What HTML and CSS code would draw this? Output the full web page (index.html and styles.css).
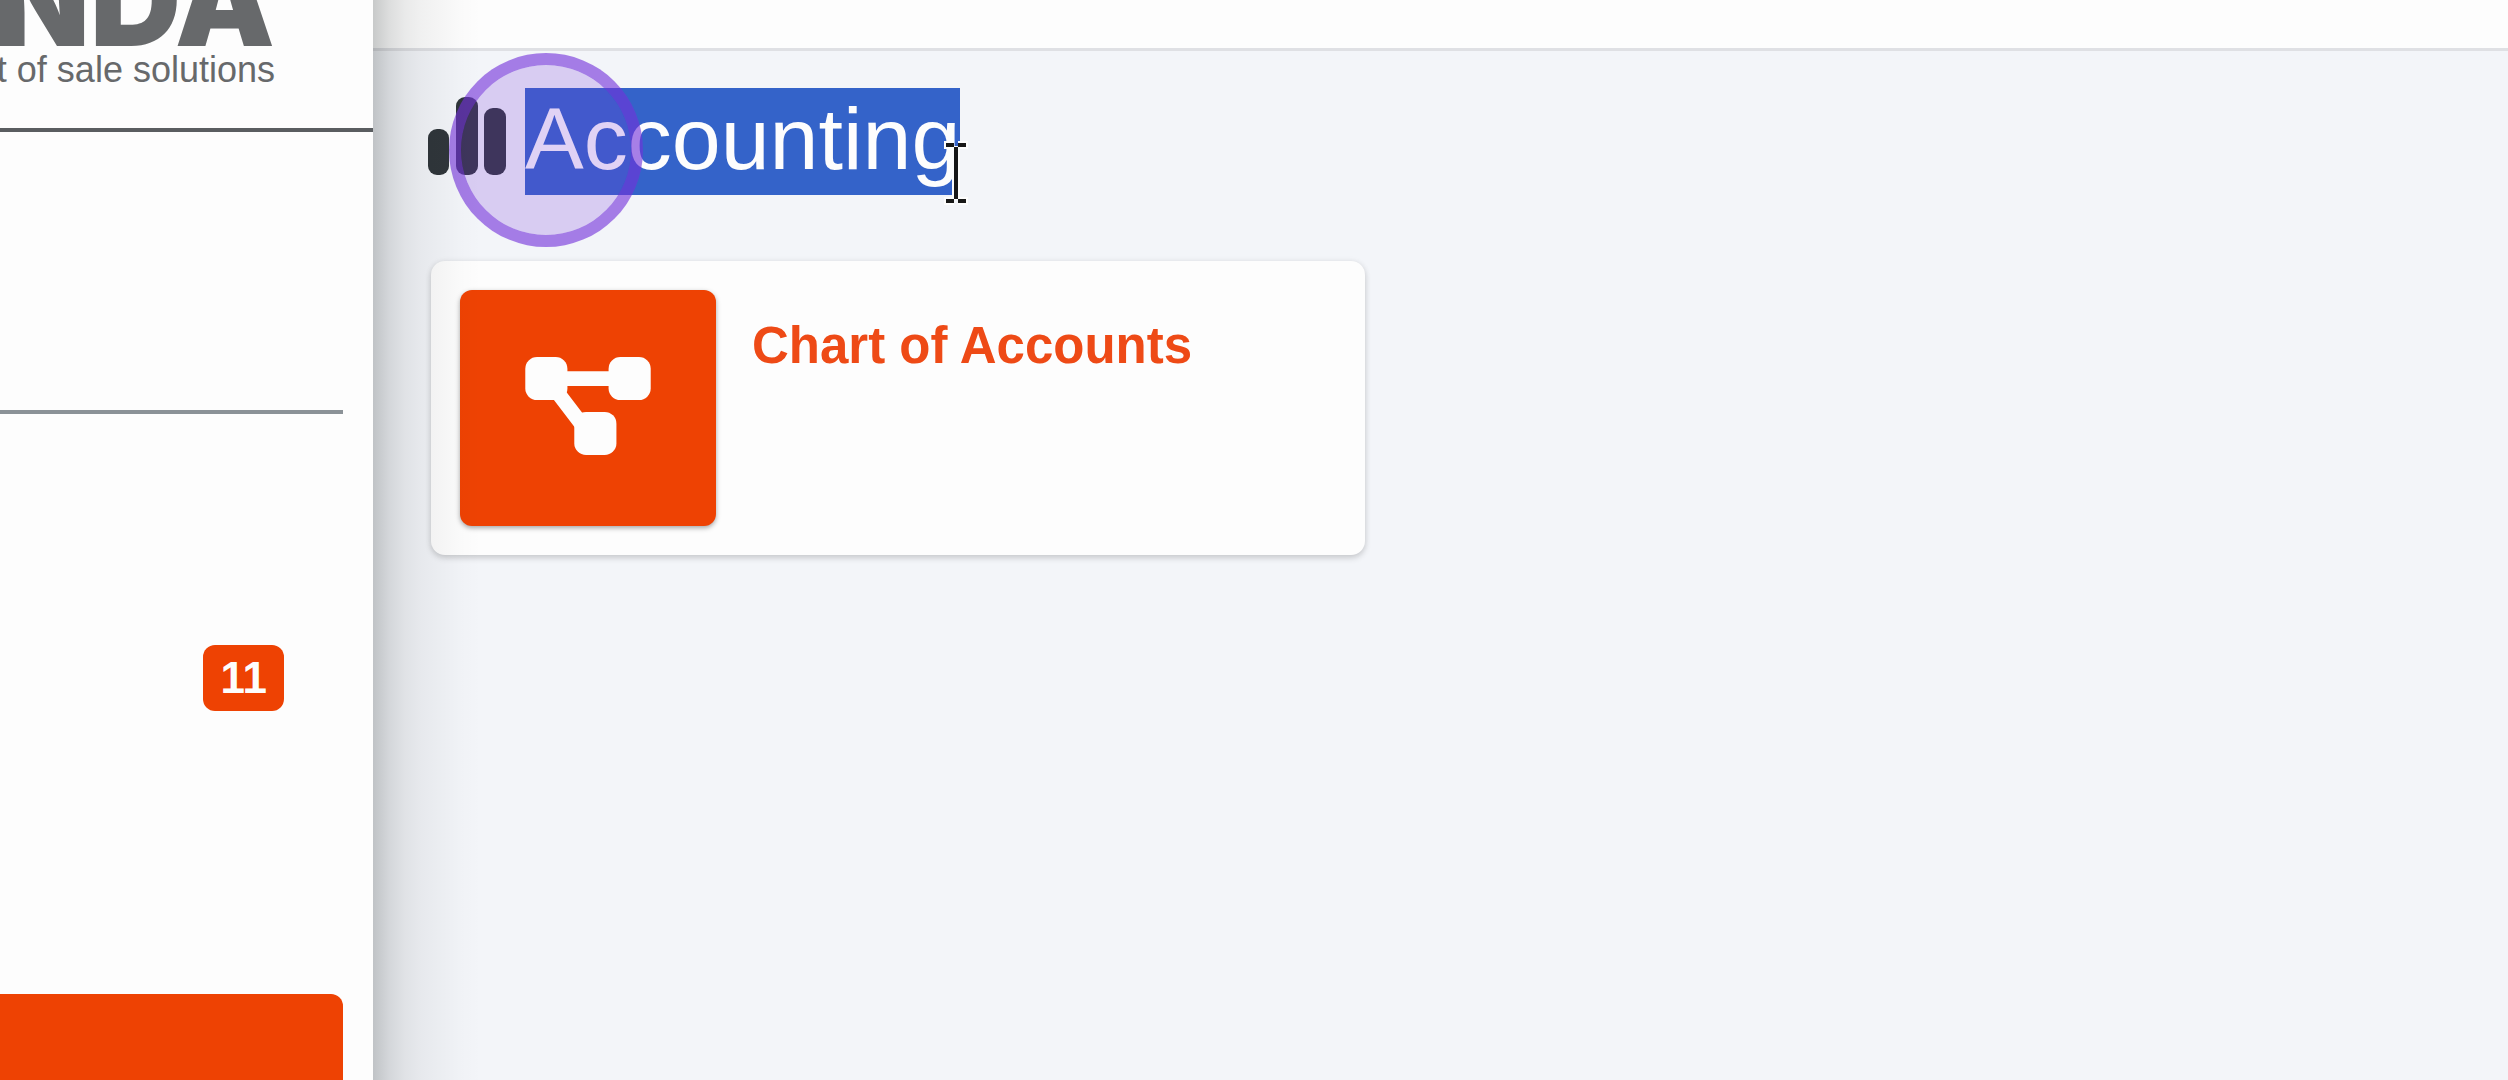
FILE: index.html
```html
<!DOCTYPE html>
<html lang="en">
<head>
<meta charset="utf-8">
<meta name="viewport" content="width=device-width, initial-scale=1">
<title>Accounting</title>
<link rel="stylesheet" href="styles.css">
</head>
<body>
<div class="app">
  <aside class="sidebar">
    <div class="brand">
      <span class="brand-name">NDA</span>
      <span class="brand-tagline">t of sale solutions</span>
    </div>
    <div class="sidebar-body">
      <div class="sidebar-section"></div>
      <div class="sidebar-item"><span class="badge">11</span></div>
      <button class="sidebar-button" type="button" aria-label="Open section"></button>
    </div>
  </aside>
  <div class="content">
    <header class="topbar"></header>
    <main class="page">
      <h1 class="page-title">
        <svg class="title-icon" viewBox="0 0 80 80" aria-hidden="true">
          <rect x="1" y="32" width="21" height="46" rx="9"/>
          <rect x="29" y="0" width="22" height="78" rx="9"/>
          <rect x="57" y="11" width="22" height="67" rx="9"/>
        </svg>
        <mark class="selected">Accounting</mark>
        <span class="click-ring"></span>
        <svg class="text-cursor" viewBox="0 0 28 64" aria-hidden="true">
          <path class="cursor-halo" d="M2 4h10M16 4h10M14 5v54M2 60h10M16 60h10"/>
          <path class="cursor-line" d="M4 4h8M16 4h8M14 6v52M4 60h8M16 60h8"/>
        </svg>
      </h1>
      <a class="card" href="#">
        <span class="card-icon">
          <svg class="diagram-icon" viewBox="0 0 128 100" aria-hidden="true">
            <path class="diagram-links" d="M22 22H106M22 22L70 85"/>
            <rect x="0" y="0" width="43" height="44" rx="12"/>
            <rect x="85" y="0" width="43" height="44" rx="12"/>
            <rect x="50" y="56" width="43" height="44" rx="12"/>
          </svg>
        </span>
        <span class="card-title">Chart of Accounts</span>
      </a>
    </main>
  </div>
</div>
</body>
</html>
```

FILE: styles.css
```css
* {
  box-sizing: border-box;
}

body {
  margin: 0;
  background: #f3f5f9;
  font-family: "Liberation Sans", Arial, sans-serif;
}

.app {
  display: flex;
  height: 100vh;
  overflow: hidden;
}

/* Sidebar */
.sidebar {
  position: relative;
  z-index: 1;
  display: flex;
  flex-direction: column;
  flex: 0 0 373px;
  min-width: 0;
  background: #fdfdfd;
}

/* Soft shadow cast on the content */
.sidebar::after {
  content: "";
  position: absolute;
  top: 0;
  bottom: 0;
  left: 100%;
  width: 108px;
  background: linear-gradient(to right,
    rgba(0, 8, 8, 0.21) 0,
    rgba(0, 8, 8, 0.13) 16px,
    rgba(0, 8, 8, 0.08) 32px,
    rgba(0, 8, 8, 0.05) 48px,
    rgba(0, 8, 8, 0.03) 68px,
    rgba(0, 8, 8, 0.01) 88px,
    rgba(0, 8, 8, 0) 108px);
  pointer-events: none;
}

.brand {
  display: flex;
  flex-direction: column;
  align-items: flex-end;
  justify-content: flex-end;
  flex: none;
  height: 132px;
  padding: 0 98px 36px 0;
  border-bottom: 4px solid #5a5d60;
  color: #67696b;
  white-space: nowrap;
}

.brand-name {
  font: 900 126px/96px Inter, "Liberation Sans", sans-serif;
}

.brand-tagline {
  font-size: 36px;
  line-height: 44px;
}

.sidebar-body {
  display: flex;
  flex-direction: column;
  flex: none;
  padding-right: 30px;
}

.sidebar-section {
  height: 282px;
  border-bottom: 4px solid #8b9297;
}

.sidebar-item {
  display: flex;
  justify-content: flex-end;
  align-items: flex-start;
  height: 580px;
  padding: 231px 59px 0 0;
}

.badge {
  padding: 0 17px;
  border-radius: 12px;
  background: #ee4203;
  color: #fdfdfd;
  font-size: 44px;
  font-weight: 700;
  line-height: 66px;
}

.sidebar-button {
  height: 120px;
  padding: 0;
  border: 0;
  border-radius: 0 12px 12px 0;
  background: #ee4203;
}

/* Content */
.content {
  flex: 1;
  min-width: 0;
}

.topbar {
  height: 51px;
  border-bottom: 3px solid #dfe0e4;
  background: #fdfdfd;
}

.page {
  padding: 37px 54px;
}

.page-title {
  position: relative;
  display: flex;
  align-items: flex-start;
  gap: 18px;
  margin: 0 0 66px;
  font-size: 88px;
  font-weight: 400;
  line-height: 98px;
}

.title-icon {
  width: 80px;
  height: 80px;
  margin-top: 9px;
  fill: #30363b;
}

.selected {
  padding: 2px 0 7px;
  background: #3463c9;
  color: #fdfdfd;
}

.click-ring {
  position: absolute;
  top: -35px;
  left: 22px;
  width: 194px;
  height: 194px;
  border: 12px solid rgba(115, 50, 218, 0.62);
  border-radius: 50%;
  background: rgba(119, 50, 216, 0.21);
  background-clip: padding-box;
}

.text-cursor {
  position: absolute;
  top: 53px;
  left: 515px;
  width: 28px;
  height: 64px;
  fill: none;
}

.cursor-halo {
  stroke: #fdfdfd;
  stroke-width: 8;
}

.cursor-line {
  stroke: #181818;
  stroke-width: 4;
}

.card {
  display: flex;
  align-items: flex-start;
  gap: 36px;
  max-width: 934px;
  margin-left: 4px;
  padding: 29px;
  border-radius: 14px;
  background: #fdfdfd;
  box-shadow: 0 3px 6px rgba(0, 0, 0, 0.16), 0 0 6px rgba(0, 0, 0, 0.06);
  color: #ee4a16;
  text-decoration: none;
}

.card-icon {
  display: flex;
  align-items: center;
  justify-content: center;
  flex: none;
  width: 256px;
  height: 236px;
  padding-bottom: 4px;
  border-radius: 12px;
  background: #ee4203;
  box-shadow: 0 2px 5px rgba(0, 0, 0, 0.35);
}

.diagram-icon {
  width: 126px;
  height: 98px;
  fill: #fdfdfd;
}

.diagram-links {
  stroke: #fdfdfd;
  stroke-width: 15;
}

.card-title {
  padding-top: 27px;
  font-size: 51px;
  font-weight: 700;
  line-height: 58px;
}
```
